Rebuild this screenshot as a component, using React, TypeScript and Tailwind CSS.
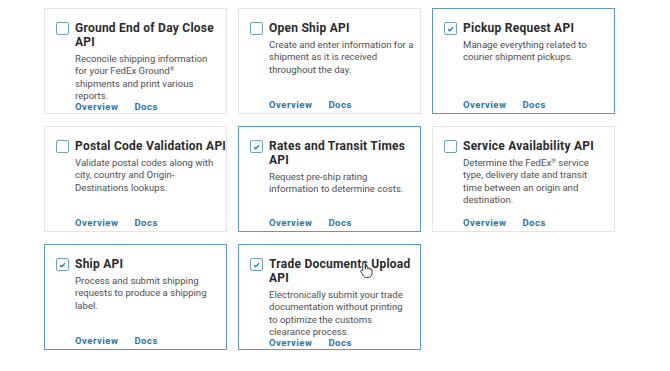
import { useState } from 'react';
import type { ReactNode } from 'react';

type ApiItem = {
  id: string;
  title: string[];
  desc: ReactNode[];
  checked?: boolean;
};

const Reg = () => <sup className="text-[6px]">®</sup>;

const apis: ApiItem[] = [
  {
    id: 'ground-eod',
    title: ['Ground End of Day Close', 'API'],
    desc: [
      'Reconcile shipping information',
      <>
        for your FedEx Ground
        <Reg />
      </>,
      'shipments and print various',
      'reports.',
    ],
  },
  {
    id: 'open-ship',
    title: ['Open Ship API'],
    desc: ['Create and enter information for a', 'shipment as it is received', 'throughout the day.'],
  },
  {
    id: 'pickup',
    title: ['Pickup Request API'],
    desc: ['Manage everything related to', 'courier shipment pickups.'],
    checked: true,
  },
  {
    id: 'postal',
    title: ['Postal Code Validation API'],
    desc: ['Validate postal codes along with', 'city, country and Origin-', 'Destinations lookups.'],
  },
  {
    id: 'rates',
    title: ['Rates and Transit Times', 'API'],
    desc: ['Request pre-ship rating', 'information to determine costs.'],
    checked: true,
  },
  {
    id: 'service',
    title: ['Service Availability API'],
    desc: [
      <>
        Determine the FedEx
        <Reg /> service
      </>,
      'type, delivery date and transit',
      'time between an origin and',
      'destination.',
    ],
  },
  {
    id: 'ship',
    title: ['Ship API'],
    desc: ['Process and submit shipping', 'requests to produce a shipping', 'label.'],
    checked: true,
  },
  {
    id: 'trade',
    title: ['Trade Documents Upload', 'API'],
    desc: [
      'Electronically submit your trade',
      'documentation without printing',
      'to optimize the customs',
      'clearance process.',
    ],
    checked: true,
  },
];

const App = () => {
  const [selected, setSelected] = useState<Record<string, boolean>>(
    Object.fromEntries(apis.map((a) => [a.id, !!a.checked])),
  );

  return (
    <div
      className="relative min-h-[371px] w-full bg-white pl-[44px] pt-[8px]"
      style={{ fontFamily: 'Roboto, "Liberation Sans", sans-serif' }}
    >
      <div className="grid grid-cols-[repeat(3,183px)] gap-x-[11px] gap-y-[12px]">
        {apis.map((api) => (
          <ApiCard
            key={api.id}
            api={api}
            checked={selected[api.id]}
            onToggle={() => setSelected((s) => ({ ...s, [api.id]: !s[api.id] }))}
          />
        ))}
      </div>

      {/* hand cursor over the trade card */}
      <svg
        className="absolute left-[360px] top-[261px]"
        width="13"
        height="17"
        viewBox="0 0 13 17"
      >
        <path
          d="M4 1.2c.7 0 1.2.5 1.2 1.2V8l.3-.1V6.6c0-.6.5-1.1 1.1-1.1s1.1.5 1.1 1.1v1.1c.1-.5.6-.9 1.1-.9.6 0 1.1.5 1.1 1.1v.6c.2-.4.6-.6 1-.6.6 0 1.1.5 1.1 1.1v3.6c0 2.2-1.6 3.9-3.8 3.9H6.4c-1.2 0-2.2-.6-2.9-1.5L1 10.8c-.4-.5-.3-1.2.2-1.5.5-.4 1.1-.3 1.5.2l.1.1V2.4C2.8 1.7 3.3 1.2 4 1.2z"
          fill="#fff"
          stroke="#222"
          strokeWidth="0.9"
        />
      </svg>
    </div>
  );
};

export default App;

const ApiCard = ({
  api,
  checked,
  onToggle,
}: {
  api: ApiItem;
  checked?: boolean;
  onToggle: () => void;
}) => {
  return (
    <div
      className={`flex h-[106px] gap-[6px] border pl-[11px] pr-[2px] pt-[12px] pb-[3px] ${
        checked ? 'border-[#5d9bb8]' : 'border-[#e4e4e4]'
      }`}
    >
      <button
        type="button"
        onClick={onToggle}
        className="mt-[1px] flex h-[13px] w-[13px] shrink-0 items-center justify-center rounded-[2px] border border-[#6ea2bb] bg-white"
      >
        {checked && (
          <svg width="7" height="6" viewBox="0 0 7 6">
            <path
              d="M1 3.2l1.7 1.6L6 1.2"
              fill="none"
              stroke="#2a7bab"
              strokeWidth="1.3"
            />
          </svg>
        )}
      </button>

      <div className="flex min-w-0 flex-1 flex-col whitespace-nowrap">
        <h4 className="text-[12px] font-bold leading-[14px] tracking-[0.25px] text-[#2b2b2b]">
          {api.title.map((line, i) => (
            <div key={i}>{line}</div>
          ))}
        </h4>
        <div className="mt-[4px] text-[9.6px] leading-[12.3px] text-[#505050]">
          {api.desc.map((line, i) => (
            <div key={i}>{line}</div>
          ))}
        </div>

        <div className="mt-auto flex shrink-0 gap-[16px] text-[9.5px] font-bold leading-[10px] tracking-[0.5px] text-[#1f78a8]">
          <a href="#overview">Overview</a>
          <a href="#docs">Docs</a>
        </div>
      </div>
    </div>
  );
};
